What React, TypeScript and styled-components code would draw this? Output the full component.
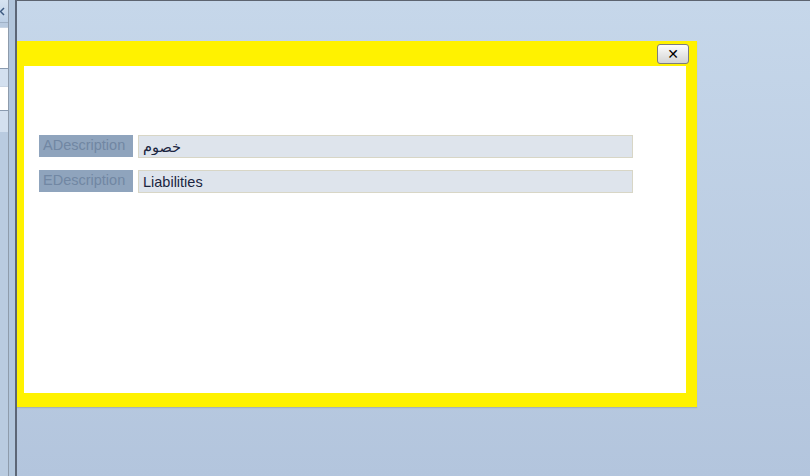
import React from 'react';
import styled, {createGlobalStyle} from "styled-components";

const GlobalStyle = createGlobalStyle`
    html, body {
        margin: 0;
        padding: 0;
        width: 810px;
        height: 476px;
        overflow: hidden;
        font-family: "Liberation Sans", Arial, sans-serif;
    }
`;

const fields = [
    {label: "ADescription", value: "خصوم"},
    {label: "EDescription", value: "Liabilities"},
];

const navItems = [
    {height: 40, active: false},
    {height: 17, active: true},
    {height: 23, active: false},
    {height: 21, active: true},
];

export default function App() {
    return (
        <StyledPage>
            <GlobalStyle/>
            <StyledSidebar>
                <StyledCollapse>
                    <svg width="8" height="22" viewBox="0 0 8 22">
                        <path d="M4 8 L0.5 11.5 L4 15" fill="none" stroke="#3e5a80" strokeWidth="1.5"/>
                    </svg>
                </StyledCollapse>
                {navItems.map((item, i) => (
                    <StyledNavItem key={i} $height={item.height} $active={item.active}/>
                ))}
            </StyledSidebar>
            <StyledSplitter/>
            <StyledWorkArea>
                <StyledDialog>
                    <StyledDialogHeader>
                        <StyledCloseButton type="button">✕</StyledCloseButton>
                    </StyledDialogHeader>
                    <StyledDialogBody>
                        {fields.map((f) => (
                            <StyledFieldRow key={f.label}>
                                <StyledLabel>{f.label}</StyledLabel>
                                <StyledInput readOnly defaultValue={f.value}/>
                            </StyledFieldRow>
                        ))}
                    </StyledDialogBody>
                </StyledDialog>
            </StyledWorkArea>
        </StyledPage>
    );
}

const StyledPage = styled.div`
    display: flex;
    width: 810px;
    height: 476px;
    background: #c5d5e8;
`;

const StyledSidebar = styled.div`
    display: flex;
    flex-direction: column;
    width: 8px;
    background: #b9cbe0;
    border-right: 1px solid #8e9bab;
`;

const StyledCollapse = styled.div`
    height: 22px;
    background: linear-gradient(#d6e3f1, #bdd0e6);
    border-bottom: 1px solid #9fb1c6;
    margin-bottom: 4px;

    svg {
        display: block;
    }
`;

const StyledNavItem = styled.div<{ $height: number; $active: boolean }>`
    height: ${p => p.$height}px;
    background: ${p => p.$active ? "#d3e0ef" : "#ffffff"};
    border-top: 1px solid ${p => p.$active ? "#8a9bb0" : "#c9d5e3"};
`;

const StyledSplitter = styled.div`
    width: 6px;
    background: #b2c6dc;
    border-right: 2px solid #5c6676;
`;

const StyledWorkArea = styled.div`
    flex: 1;
    padding-top: 40px;
    border-top: 1px solid #5d6470;
    background: linear-gradient(#c6d7ea, #b3c5dd);
`;

const StyledDialog = styled.div`
    display: flex;
    flex-direction: column;
    width: 662px;
    height: 352px;
    padding: 0 11px 14px 0;
    border-left: 7px solid #fff200;
    background: #fff200;
    box-shadow: 0 1px 1px rgba(120, 120, 80, 0.25);
`;

const StyledDialogHeader = styled.div`
    display: flex;
    justify-content: flex-end;
    align-items: flex-start;
    height: 25px;
    padding-top: 3px;
    margin-right: -3px;
    box-sizing: border-box;
`;

const StyledCloseButton = styled.button`
    width: 32px;
    height: 20px;
    padding: 0;
    border: 1px solid #7d7d7d;
    border-radius: 3px;
    background: linear-gradient(#fdfdfd, #e6e6e6 55%, #d4d4d4);
    color: #000;
    font-family: "DejaVu Sans", sans-serif;
    font-size: 14px;
    font-weight: bold;
    line-height: 16px;
`;

const StyledDialogBody = styled.div`
    flex: 1;
    display: flex;
    flex-direction: column;
    gap: 12px;
    padding: 69px 0 0 15px;
    background: #ffffff;
`;

const StyledFieldRow = styled.div`
    display: flex;
    gap: 5px;
    align-items: flex-start;
`;

const StyledLabel = styled.div`
    width: 90px;
    height: 22px;
    padding-left: 4px;
    background: #8fa4bd;
    color: #7187a3;
    font-size: 14.5px;
    line-height: 20px;
`;

const StyledInput = styled.input`
    width: 495px;
    height: 23px;
    box-sizing: border-box;
    padding: 0 4px;
    border: 1px solid #d8d6c6;
    background: #dee4ec;
    color: #1a2540;
    font-family: "Liberation Sans", "DejaVu Sans", sans-serif;
    font-size: 14.5px;
    outline: none;
`;
